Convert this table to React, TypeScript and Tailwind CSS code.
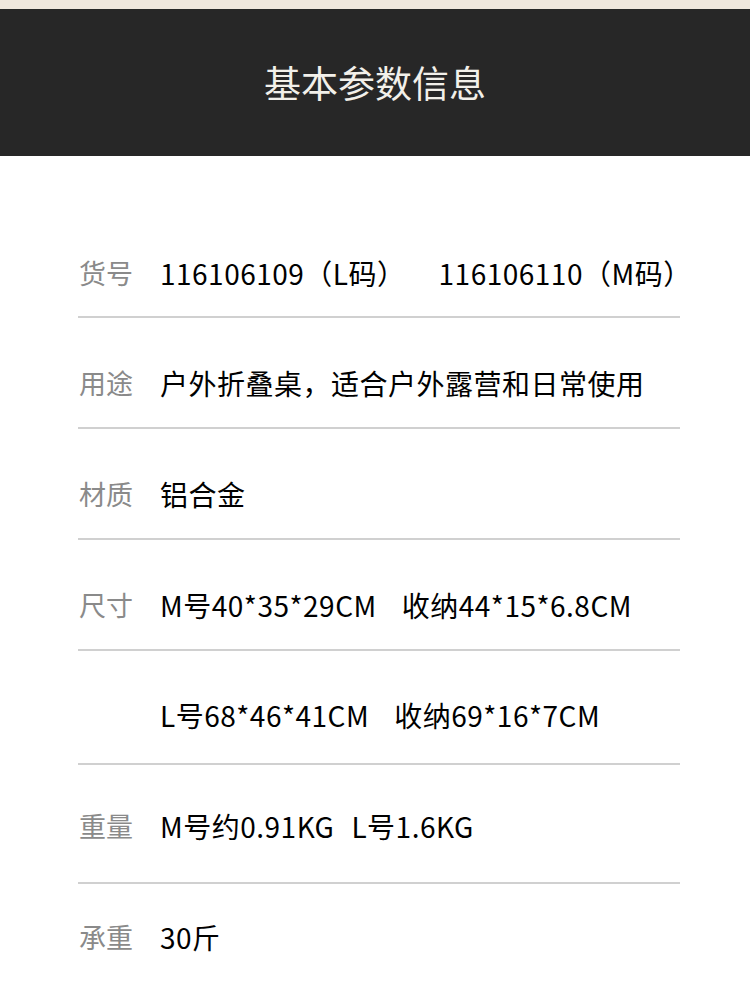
const rows: { label: string; parts: string[]; gap: number; top: number; bottom: number }[] = [
  { label: '货号', parts: ['116106109（L码）', '116106110（M码）'], gap: 33, top: 97, bottom: 23 },
  { label: '用途', parts: ['户外折叠桌，适合户外露营和日常使用'], gap: 0, top: 45, bottom: 24 },
  { label: '材质', parts: ['铝合金'], gap: 0, top: 45, bottom: 24 },
  { label: '尺寸', parts: ['M号40*35*29CM', '收纳44*15*6.8CM'], gap: 25, top: 45, bottom: 24 },
  { label: '', parts: ['L号68*46*41CM', '收纳69*16*7CM'], gap: 25, top: 44, bottom: 28 },
  { label: '重量', parts: ['M号约0.91KG', 'L号1.6KG'], gap: 17, top: 41, bottom: 36 },
  { label: '承重', parts: ['30斤'], gap: 0, top: 33, bottom: 0 },
];

export default function App() {
  return (
    <div
      className="w-[750px] h-[995px] overflow-hidden bg-white"
      style={{ fontFamily: '"Noto Sans CJK SC", "Noto Sans", sans-serif' }}
    >
      <div className="h-[9px] bg-[#efe7dd]" />
      <div className="h-[147px] bg-[#272727] flex items-center justify-center">
        <h1 className="text-[37px] leading-none text-[#f2f0ea]">基本参数信息</h1>
      </div>

      <div className="pl-[79px] pr-[70px]">
        {rows.map((r, i) => (
          <div key={i}>
            <div
              className="flex items-center h-[40px]"
              style={{ marginTop: r.top, marginBottom: r.bottom }}
            >
              <span className="w-[81px] shrink-0 text-[27px] text-[#8a8a8a]">{r.label}</span>
              <div className="flex whitespace-nowrap text-[28px] tracking-[0.5px] text-black" style={{ gap: r.gap }}>
                {r.parts.map((p) => (
                  <span key={p}>{p}</span>
                ))}
              </div>
            </div>
            {i < rows.length - 1 && <div className="h-[2px] bg-[#d0d0d0] -ml-px" />}
          </div>
        ))}
      </div>
    </div>
  );
}
